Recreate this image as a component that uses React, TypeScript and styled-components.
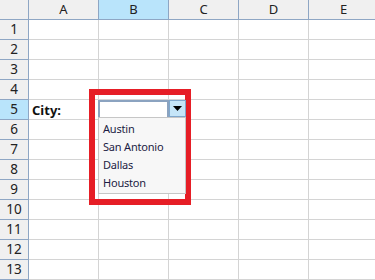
import React from "react";
import styled, { createGlobalStyle } from "styled-components";

const Global = createGlobalStyle`
  html, body { margin: 0; padding: 0; background: #ffffff; }
  body { font-family: "Noto Sans", "Open Sans", sans-serif; overflow: hidden; }
`;

const Wrap = styled.div`
  position: relative;
  width: 375px;
  height: 280px;
  overflow: hidden;
`;

const Grid = styled.div`
  display: grid;
  grid-template-columns: 29px repeat(5, 70px);
  grid-auto-rows: 20px;
`;

const Corner = styled.div`
  box-sizing: border-box;
  background: #f0f0f0;
  border-right: 1px solid #8ea6c4;
  border-bottom: 1px solid #8ea6c4;
`;

const ColHead = styled.div<{ $sel?: boolean }>`
  box-sizing: border-box;
  background: ${(p) => (p.$sel ? "#b9e4fb" : "#f0f0f0")};
  border-right: 1px solid #8ea6c4;
  border-bottom: 1px solid #8ea6c4;
  display: flex;
  align-items: center;
  justify-content: center;
  font-size: 13px;
  color: #222222;
  padding-bottom: 1px;
`;

const RowHead = styled.div<{ $sel?: boolean }>`
  box-sizing: border-box;
  background: ${(p) => (p.$sel ? "#b9e4fb" : "#f0f0f0")};
  border-right: 1px solid #8ea6c4;
  border-bottom: 1px solid #8ea6c4;
  display: flex;
  align-items: center;
  justify-content: center;
  font-size: 13.5px;
  color: #222222;
  padding-bottom: 1px;
`;

const Cell = styled.div<{ $bold?: boolean }>`
  box-sizing: border-box;
  border-right: 1px solid #d4d4d4;
  border-bottom: 1px solid #d4d4d4;
  display: flex;
  align-items: center;
  padding-left: 3px;
  font-size: 13px;
  font-weight: ${(p) => (p.$bold ? 700 : 400)};
  color: #111111;
  white-space: nowrap;
`;

const Highlight = styled.div`
  position: absolute;
  left: 89px;
  top: 89px;
  width: 102px;
  height: 116px;
  box-sizing: border-box;
  border: 6px solid #e61e26;
`;

const Combo = styled.div`
  position: absolute;
  left: 98px;
  top: 100px;
  width: 88px;
  display: flex;
  flex-direction: column;
`;

const ComboBar = styled.div`
  display: flex;
  height: 17px;
`;

const Field = styled.div`
  flex: 1;
  box-sizing: border-box;
  background: #ffffff;
  border-top: 2px solid #8ba3c0;
  border-left: 2px solid #8ba3c0;
  border-right: 2px solid #8ba3c0;
`;

const DropButton = styled.div`
  width: 17px;
  box-sizing: border-box;
  background: #c5e5f8;
  border: 1px solid #7fa7cc;
  display: flex;
  align-items: center;
  justify-content: center;
`;

const List = styled.div`
  box-sizing: border-box;
  height: 77px;
  background: #f7f7f7;
  border: 1px solid #c6c6c6;
  display: flex;
  flex-direction: column;
  padding: 2px 0 0 4px;
`;

const Item = styled.div`
  height: 18px;
  line-height: 18px;
  font-size: 11px;
  letter-spacing: -0.2px;
  color: #1c1c44;
`;

const cols = ["A", "B", "C", "D", "E"];
const rows = Array.from({ length: 13 }, (_, i) => i + 1);

export default function App() {
  return (
    <Wrap>
      <Global />
      <Grid>
        <Corner />
        {cols.map((c) => (
          <ColHead key={c} $sel={c === "B"}>
            {c}
          </ColHead>
        ))}
        {rows.map((r) => (
          <React.Fragment key={r}>
            <RowHead $sel={r === 5}>{r}</RowHead>
            {cols.map((c) => (
              <Cell key={c} $bold={r === 5 && c === "A"}>
                {r === 5 && c === "A" ? "City:" : ""}
              </Cell>
            ))}
          </React.Fragment>
        ))}
      </Grid>
      <Highlight />
      <Combo>
        <ComboBar>
          <Field />
          <DropButton>
            <svg width="9" height="5" viewBox="0 0 9 5">
              <path d="M0 0 H9 L4.5 5 Z" fill="#000" />
            </svg>
          </DropButton>
        </ComboBar>
        <List>
          <Item>Austin</Item>
          <Item>San Antonio</Item>
          <Item>Dallas</Item>
          <Item>Houston</Item>
        </List>
      </Combo>
    </Wrap>
  );
}
